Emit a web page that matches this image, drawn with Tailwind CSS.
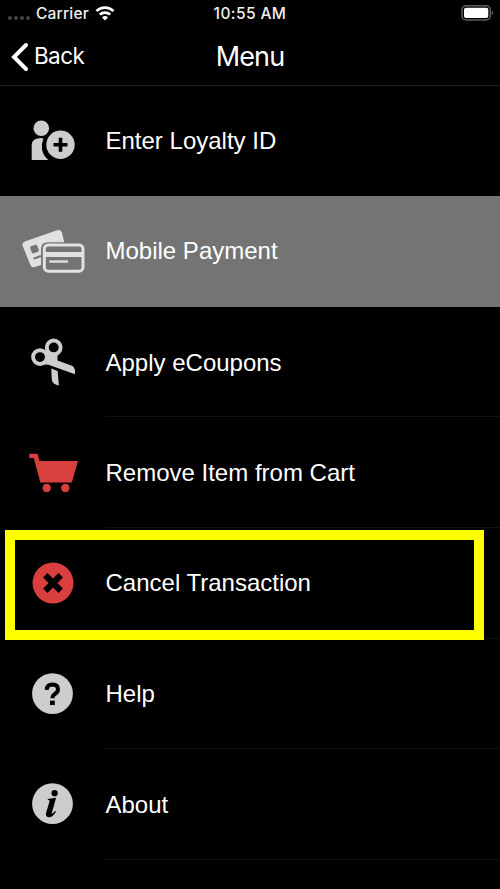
<!DOCTYPE html>
<html lang="en">
<head>
<meta charset="utf-8">
<title>Menu</title>
<script src="https://cdn.jsdelivr.net/npm/@tailwindcss/browser@4"></script>
</head>
<body class="bg-black text-white">
<div class="relative flex h-[889px] w-[500px] flex-col overflow-hidden bg-black">
  <header class="-mb-[0.6px] h-[86px] shrink-0 border-b border-[#202020] font-['Inter',sans-serif]">
    <div class="grid h-[27px] grid-cols-3 items-center text-[15.5px] leading-[27px] font-medium text-[#f0f0f0]">
      <div class="flex items-center pl-[8px]">
        <svg class="h-[27px] w-[24px] shrink-0" viewBox="8 0 24 27" fill="#404040"><circle cx="10" cy="18" r="2.100"/><circle cx="16" cy="18" r="2.100"/><circle cx="22" cy="18" r="2.100"/><circle cx="28" cy="18" r="2.100"/></svg>
        <span class="w-[61px] pl-[4px] tracking-[0.2px] whitespace-nowrap">Carrier</span>
        <svg class="h-[27px] w-[24px] shrink-0" viewBox="93 0 24 27" fill="none" stroke="#fff" stroke-width="2.7"><path d="M96.5 11.1a12.1 12.1 0 0 1 17 0M99.800 14.600a7.600 7.600 0 0 1 10.400 0"/><path d="M102 17.400a4.500 4.500 0 0 1 6 0l-3 3.100z" fill="#fff" stroke="none"/></svg>
      </div>
      <span class="text-center tracking-[0.4px] whitespace-nowrap">10:55 AM</span>
      <svg class="h-[27px] w-[40px] justify-self-end" viewBox="460 0 40 27"><rect x="462" y="5.800" width="28.300" height="14.200" rx="4" fill="none" stroke="#606060" stroke-width="1.500"/><rect x="464" y="7.800" width="24.300" height="10.200" rx="2" fill="#fff"/><path d="M491.800 10.500q3 2.400 0 4.800z" fill="#606060"/></svg>
    </div>
    <div class="grid h-[58px] grid-cols-3 items-center">
      <div class="flex items-center pl-[10px]">
        <svg class="h-[58px] w-[20px]" viewBox="10 27 20 58" fill="none" stroke="#fff" stroke-width="4" stroke-linecap="round" stroke-linejoin="miter"><path d="M26 44 14 56l12 12"/></svg>
        <span class="-mt-[2px] pl-[4px] text-[22.5px] leading-[58px] tracking-[-0.6px]">Back</span>
      </div>
      <h1 class="text-center text-[27px] leading-[60px] font-normal tracking-[-0.9px]">Menu</h1>
    </div>
  </header>
  <nav class="flex flex-col font-['Liberation_Sans',Arial,sans-serif] text-[24px]">
    <a class="flex h-[110.65px] items-center">
      <svg class="h-full w-[105px] shrink-0" viewBox="0 85.4 105 110.65" fill="#cdcdcd"><circle cx="41.3" cy="128.7" r="7.8"/><path d="M31.7 160.3v-15q0-5.500 6-6.500 3-.6 5.700.1-1.900 5-1.400 10.600.8 6.300 6.200 10.800z"/><circle cx="60.500" cy="145.200" r="14.200"/><path d="M60.500 138.200v14M53.500 145.200h14" stroke="#000" stroke-width="3.600"/></svg>
      <span class="pl-[0.5px]">Enter Loyalty ID</span>
    </a>
    <a class="flex h-[110.65px] items-center bg-[#747474]">
      <svg class="h-full w-[105px] shrink-0" viewBox="0 196.05 105 110.65"><path d="M24.800 241.500 57 230.300q3.500-1 4.900 2l2.300 10H48q-7 0-7 7V265l-7 2.300q-2.500.5-3.700-2.500l-7.700-19q-1-3 2.200-4.300z" fill="#e1e1e1"/><path d="m31.600 247.800 4.200-1.500 1.600 4-4.200 1.700z" fill="#747474" stroke="#747474" stroke-width="3" stroke-linejoin="round"/><path d="m33.500 258.800 7.500-2.800" stroke="#747474" stroke-width="2"/><rect x="44.300" y="245" width="38.700" height="26.200" rx="4" fill="none" stroke="#e1e1e1" stroke-width="3"/><path d="M45 254.500h37" stroke="#e1e1e1" stroke-width="5"/><path d="M49.300 261.600H68" stroke="#e1e1e1" stroke-width="2.300"/></svg>
      <span class="pl-[0.5px]">Mobile Payment</span>
    </a>
    <a class="flex h-[110.65px] items-center">
      <svg class="h-full w-[105px] shrink-0" viewBox="0 306.7 105 110.65" fill="#cdcdcd"><g fill="none" stroke="#cdcdcd" stroke-width="3.900"><circle cx="40" cy="356.800" r="6.900"/><circle cx="53.700" cy="347.100" r="6.900"/></g><path d="M45.500 351.500 51 354.500l6.500-.4v6.200l14.500 5.200q2.500 1.300 3 4.500v4L48.500 364.500l-6.500-.500 5.500-5.500zM51.200 368.200l6.400 2.400 1.300 14.600q-6-.8-7.100-5.500z"/></svg>
      <span class="flex h-full grow items-center border-b border-[#111] pt-[2px] pl-[0.5px]">Apply eCoupons</span>
    </a>
    <a class="flex h-[110.65px] items-center">
      <svg class="h-full w-[105px] shrink-0" viewBox="0 417.35 105 110.65" fill="#d83f3e"><path d="M29.200 454h8.300l2 7.300H78l-6.200 21.500H40.300L33.800 458.300h-4.600z"/><circle cx="46.700" cy="488.300" r="4.200"/><circle cx="65.300" cy="488.300" r="4.200"/></svg>
      <span class="flex h-full grow items-center border-b border-[#111] pt-[1.5px] pl-[0.5px]">Remove Item from Cart</span>
    </a>
    <a class="flex h-[110.65px] items-center">
      <svg class="h-full w-[105px] shrink-0" viewBox="0 528 105 110.65"><circle cx="53" cy="583" r="20.500" fill="#d83f3e"/><path d="m45.300 575.300 15.400 15.400m0-15.400-15.400 15.400" stroke="#000" stroke-width="6.200"/></svg>
      <span class="flex h-full grow items-center border-b border-[#111] pl-[0.5px]">Cancel Transaction</span>
    </a>
    <a class="flex h-[110.65px] items-center">
      <svg class="h-full w-[105px] shrink-0" viewBox="0 638.65 105 110.65"><circle cx="52.500" cy="693.300" r="20.400" fill="#cdcdcd"/><path d="M46.700 689.500q.2-5.400 5.900-5.400 5.400.2 5.400 4.700 0 2.700-2.900 4.700-2.700 1.800-2.700 4.500" fill="none" stroke="#000" stroke-width="4"/><path d="M50 700.300h4.800v4.400H50z"/></svg>
      <span class="flex h-full grow items-center border-b border-[#111] pt-[2px] pl-[0.5px]">Help</span>
    </a>
    <a class="flex h-[110.65px] items-center">
      <svg class="h-full w-[105px] shrink-0" viewBox="0 749.3 105 110.65"><circle cx="52.500" cy="804" r="20.400" fill="#cdcdcd"/><circle cx="54.600" cy="793.500" r="3.100"/><path d="m47.800 799.400 8.300-1.300-4.500 15.900q.7.500 3.600-2.700l.8.700q-3.300 5.500-7.300 5.500-3.800-.3-2.500-4.600l3.300-11.100q.4-1.600-1.700-1.400z"/></svg>
      <span class="flex h-full grow items-center border-b border-[#111] pt-[1.5px] pl-[0.5px]">About</span>
    </a>
  </nav>
  <div class="pointer-events-none absolute top-[530px] left-[5px] h-[110px] w-[479px] border-[10px] border-[#ffff00]"></div>
</div>
</body>
</html>
